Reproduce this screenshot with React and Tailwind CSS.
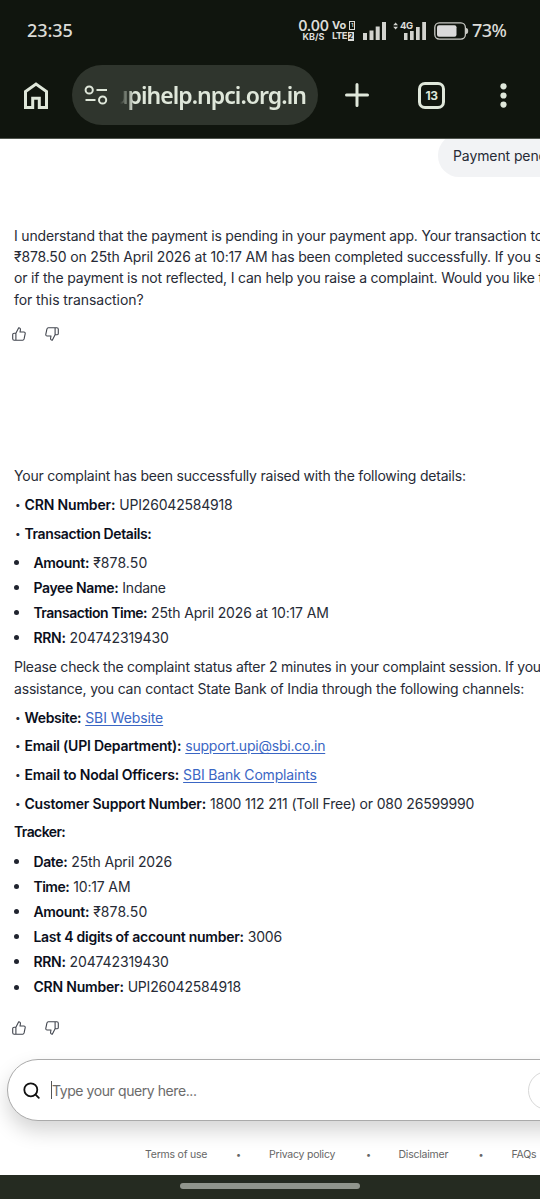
import React from 'react';

const details = [
  { label: 'Amount:', value: '₹878.50', l: 'tracking-[-0.3px]', v: 'tracking-[0.1px]' },
  { label: 'Payee Name:', value: 'Indane', l: 'tracking-[-0.35px]', v: 'tracking-[-0.25px]' },
  { label: 'Transaction Time:', value: '25th April 2026 at 10:17 AM', l: 'tracking-[-0.48px]', v: 'tracking-[-0.15px]' },
  { label: 'RRN:', value: '204742319430', l: 'tracking-[-0.3px]', v: 'tracking-[-0.13px]' },
];

const tracker = [
  { label: 'Date:', value: '25th April 2026', l: 'tracking-[-0.35px]', v: 'tracking-[-0.15px]' },
  { label: 'Time:', value: '10:17 AM', l: 'tracking-[-0.5px]', v: 'tracking-[-0.15px]' },
  { label: 'Amount:', value: '₹878.50', l: 'tracking-[-0.3px]', v: 'tracking-[0.1px]' },
  { label: 'Last 4 digits of account number:', value: '3006', l: 'tracking-[-0.26px]', v: 'tracking-[-0.15px]' },
  { label: 'RRN:', value: '204742319430', l: 'tracking-[-0.3px]', v: 'tracking-[-0.13px]' },
  { label: 'CRN Number:', value: 'UPI26042584918', l: 'tracking-[-0.2px]', v: 'tracking-[-0.2px]' },
];

const StatusBar = () => (
  <div className="flex h-[60px] items-center pt-px pl-[27px] text-[#dcdcd8]">
    <div className="w-[271px] font-['Noto_Sans'] text-[18px] font-medium tracking-[-0.1px]">23:35</div>
    <div className="w-[31px] text-center leading-none">
      <div className="text-[14px] font-semibold leading-[12px] tracking-[-0.2px]">0.00</div>
      <div className="text-[9px] font-bold leading-[9px]">KB/S</div>
    </div>
    <div className="ml-[3px] w-[24px] font-bold">
      <div className="flex items-center text-[11px] leading-[11px]">
        Vo
        <span className="ml-[3px] flex h-[9px] w-[6px] items-center justify-center border-[1.5px] border-[#dcdcd8] text-[5px] leading-none">1</span>
      </div>
      <div className="flex items-center text-[9.5px] leading-[10px] tracking-[-0.6px]">
        LTE
        <span className="ml-px flex h-[9px] w-[6px] items-center justify-center bg-[#dcdcd8] text-[7px] leading-none tracking-normal text-[#10150e]">2</span>
      </div>
    </div>
    <svg className="ml-[7px] h-[18px] w-[23px]" viewBox="0 0 23 18" fill="#d2d3ce">
      <rect x="0" y="11" width="4" height="7" />
      <rect x="6.5" y="8.5" width="4" height="9.5" />
      <rect x="12.7" y="4.5" width="4" height="13.5" />
      <rect x="19" y="0" width="4" height="18" />
    </svg>
    <div className="relative ml-[7px] h-[18px] w-[33px]">
      <svg className="h-[18px] w-[33px]" viewBox="0 0 33 18" fill="#d2d3ce">
        <path d="M0.2 3.2 2.6 0.4 5 3.2zM0.2 4.8h4.8L2.6 7.6z" />
        <rect x="11" y="11" width="3.5" height="7" />
        <rect x="17" y="9" width="3.7" height="9" />
        <rect x="23" y="5" width="3.7" height="13" />
        <rect x="29.2" y="0" width="3.8" height="18" />
      </svg>
      <span className="absolute -top-px left-[7px] text-[9.5px] font-bold leading-[10px] tracking-[-0.5px]">4G</span>
    </div>
    <svg className="ml-[8px] h-[18px] w-[35px]" viewBox="0 0 35 18" fill="none">
      <rect x="0.8" y="0.9" width="30.6" height="16.2" rx="4.5" stroke="#c9cac5" strokeWidth="1.3" />
      <rect x="3" y="3.2" width="19.5" height="11.6" rx="2" fill="#dadada" />
      <path d="M32 6q2.2 0 2.2 3T32 12z" fill="#c9cac5" />
    </svg>
    <div className="ml-[3px] font-['Noto_Sans'] text-[18px] font-medium tracking-[-0.6px]">73%</div>
  </div>
);

const BrowserBar = () => (
  <div className="flex h-[78px] items-start pt-[5px] pl-6">
    <svg className="mt-[17px] h-[27px] w-6" viewBox="0 0 24 27" fill="none" stroke="#dfe7da" strokeWidth="3">
      <path d="M1.5 25.5V9.5L12 2l10.5 7.5v16h-7.2v-9.3H8.7v9.3z" />
    </svg>
    <div className="ml-6 flex h-[60px] w-[246px] items-center rounded-full bg-[#2f352d] pl-[12px]">
      <svg className="h-5 w-6" viewBox="0 0 24 20" fill="none" stroke="#dfe7da" strokeWidth="2">
        <circle cx="5.2" cy="5" r="3.6" />
        <path d="M12.5 5h10.5M1.5 15h10" />
        <circle cx="18.6" cy="15" r="3.6" />
      </svg>
      <div className="ml-[12px] flex w-[186px] justify-end overflow-hidden mask-[linear-gradient(to_right,transparent,black_14px)] font-['Noto_Sans'] text-[23px] font-semibold leading-9 tracking-[-0.95px] whitespace-nowrap text-[#dfe7da]">
        upihelp.npci.org.in
      </div>
    </div>
    <svg className="mt-[18px] ml-[27px] h-6 w-6" viewBox="0 0 24 24" stroke="#dfe7da" strokeWidth="3" strokeLinecap="round">
      <path d="M12 1.5v21M1.5 12h21" />
    </svg>
    <div className="mt-[17px] ml-[49px] flex h-[27px] w-[27px] items-center justify-center rounded-[7px] border-[3px] border-[#dfe7da] text-[12px] font-bold tracking-[-0.5px] text-[#dfe7da]">
      13
    </div>
    <svg className="mt-[17px] ml-[55px] h-[27px] w-[7px]" viewBox="0 0 7 27" fill="#dfe7da">
      <circle cx="3.5" cy="4.3" r="3.1" />
      <circle cx="3.5" cy="13.5" r="3.1" />
      <circle cx="3.5" cy="22.6" r="3.1" />
    </svg>
  </div>
);

const ThumbUp = ({ className }) => (
  <svg className={className} viewBox="0 0 14 14" fill="none" stroke="#42464f" strokeWidth="1.1" strokeLinejoin="round" strokeLinecap="round">
    <path d="M3.9 6.2 6.7 0.8C8.2 0.8 8.6 1.9 8.4 3L8 5h3.9c.9 0 1.5.8 1.3 1.7l-1.1 5.2c-.2.8-.7 1.3-1.5 1.3H2.2c-.9 0-1.5-.6-1.5-1.5V7.6c0-.8.6-1.4 1.5-1.4zM3.9 6.2v7" />
  </svg>
);

const Feedback = () => (
  <div className="flex h-[14px] items-center gap-[19px]">
    <ThumbUp className="h-[14px] w-[14px]" />
    <ThumbUp className="h-[14px] w-[14px] rotate-180" />
  </div>
);

const Row = ({ label, value, l, v, link }) => (
  <p className="mb-[7.35px] flex h-[21.4px] items-center">
    <span className="w-[10.5px] shrink-0 pl-px text-[10px]">•</span>
    <strong className={`mr-[4px] font-semibold text-[#0b0f1c] ${l}`}>{label}</strong>
    {link ? (
      <a className={`text-[#3a66c4] underline underline-offset-2 ${v}`}>{value}</a>
    ) : (
      <span className={v}>{value}</span>
    )}
  </p>
);

const List = ({ items }) => (
  <ul className="pt-[0.4px] pb-[4.2px]">
    {items.map((item, i) => (
      <li key={i} className="mb-[3.75px] flex h-[21.4px] items-center">
        <span className="mr-[14.4px] h-[5px] w-[5px] shrink-0 rounded-full bg-[#20242f]" />
        <strong className={`mr-[4px] font-semibold text-[#0b0f1c] ${item.l}`}>{item.label}</strong>
        <span className={item.v}>{item.value}</span>
      </li>
    ))}
  </ul>
);

const App = () => {
  return (
    <div className="flex h-[1199px] w-[540px] flex-col overflow-hidden bg-white font-[Inter,sans-serif]">
      <header className="h-[139px] shrink-0 border-b border-[#50554e] bg-[#10150e]">
        <StatusBar />
        <BrowserBar />
      </header>

      <main className="h-[920px] shrink-0 overflow-hidden text-[14px] leading-[21.4px] whitespace-nowrap text-[#272b36]">
        <div className="-mt-[5px] ml-[438px] flex h-[43px] w-[200px] items-center rounded-[21px] bg-[#f2f3f5] pl-[15px] tracking-[-0.1px]">
          Payment pending
        </div>

        <div className="mt-[47.5px] ml-[14px]">
          <p className="tracking-[-0.18px]">I understand that the payment is pending in your payment app. Your transaction to</p>
          <p className="tracking-[-0.16px]">₹878.50 on 25th April 2026 at 10:17 AM has been completed successfully. If you still</p>
          <p className="tracking-[-0.19px]">or if the payment is not reflected, I can help you raise a complaint. Would you like to</p>
          <p className="tracking-[-0.07px]">for this transaction?</p>
        </div>
        <div className="mt-[17px] ml-[12px]">
          <Feedback />
        </div>

        <div className="mt-[123.9px] ml-[14px]">
          <p className="mb-[7.35px] tracking-[-0.21px]">Your complaint has been successfully raised with the following details:</p>
          <Row label="CRN Number:" value="UPI26042584918" l="tracking-[-0.15px]" v="tracking-[-0.2px]" />
          <Row label="Transaction Details:" value="" l="tracking-[-0.38px]" v="" />
          <List items={details} />
          <p className="tracking-[-0.23px]">Please check the complaint status after 2 minutes in your complaint session. If you</p>
          <p className="mb-[7.35px] tracking-[-0.18px]">assistance, you can contact State Bank of India through the following channels:</p>
          <Row label="Website:" value="SBI Website" l="tracking-[-0.35px]" v="tracking-[-0.1px]" link />
          <Row label="Email (UPI Department):" value="support.upi@sbi.co.in" l="tracking-[-0.23px]" v="tracking-[-0.22px]" link />
          <Row label="Email to Nodal Officers:" value="SBI Bank Complaints" l="tracking-[-0.18px]" v="tracking-[-0.17px]" link />
          <Row label="Customer Support Number:" value="1800 112 211 (Toll Free) or 080 26599990" l="tracking-[-0.22px]" v="tracking-[-0.17px]" />
          <p className="mb-[7.35px] font-semibold tracking-[-0.6px] text-[#0b0f1c]">Tracker:</p>
          <List items={tracker} />
        </div>
        <div className="mt-[15.5px] ml-[12px]">
          <Feedback />
        </div>
      </main>

      <div className="ml-[7px] flex h-[62px] w-[600px] shrink-0 items-center rounded-full border border-[#aaaaaa] bg-white pl-[15px] shadow-[0_10px_20px_rgba(0,0,0,0.17)]">
        <svg className="h-[17px] w-[17px]" viewBox="0 0 17 17" fill="none" stroke="#111" strokeWidth="1.8" strokeLinecap="round">
          <circle cx="7.8" cy="7.8" r="6.5" />
          <path d="m12.6 12.6 3.2 3.2" />
        </svg>
        <span className="ml-[11px] h-[18px] w-px bg-[#555]" />
        <span className="w-[476px] text-[14px] tracking-[-0.42px] text-[#6b6b6b]">Type your query here...</span>
        <span className="h-[39px] w-[39px] shrink-0 rounded-full border border-[#d8d8d8]" />
      </div>

      <footer className="flex h-[54px] shrink-0 items-center pt-[13px] pl-[145px] text-[10.5px] tracking-[-0.22px] whitespace-nowrap text-[#666]">
        <span className="w-[91px]">Terms of use</span>
        <span className="w-[33px] text-[9px]">•</span>
        <span className="w-[97px]">Privacy policy</span>
        <span className="w-[32.5px] text-[9px]">•</span>
        <span className="w-[80px]">Disclaimer</span>
        <span className="w-[33px] text-[9px]">•</span>
        <span>FAQs</span>
      </footer>

      <div className="flex h-6 shrink-0 items-start justify-center bg-[#252b21] pt-[8px]">
        <div className="h-[6px] w-[180px] rounded-full bg-[#90958d]" />
      </div>
    </div>
  );
};

export default App;
